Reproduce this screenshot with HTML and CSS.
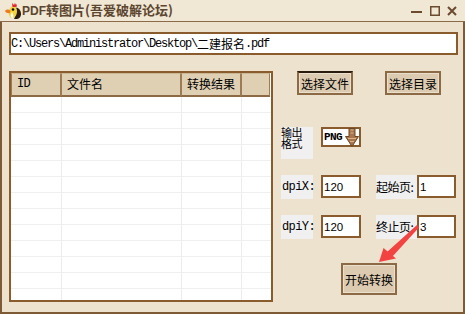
FILE: index.html
```html
<!DOCTYPE html>
<html>
<head>
<meta charset="utf-8">
<link rel="stylesheet" href="styles.css">
</head>
<body>
<div class="window">
  <div class="titlebar">
    <svg class="logo" width="18" height="18" viewBox="0 0 18 18">
      <path d="M11 6 C14 5 17 8 17 12 C17 15 15 17 12 17 L10 17 C12 14 12 10 11 6 Z" fill="#2a1a14"/>
      <path d="M7 5 C10 3 13 5 13 9 C13 13 11 16 8 16 C6 16 5 14 5 12 C5 9 5 7 7 5 Z" fill="#f4d23a"/>
      <path d="M8 10 C9 12 10 14 9 16 C7 16 6 14 7 12 Z" fill="#ffffff"/>
      <path d="M8 1 L10 3 L11 1 L12 3 L13 2 L12.5 5 L8.5 5 Z" fill="#e2262a"/>
      <path d="M1 9 C2 7 5 7 6.5 8.5 L6 11 C4 11.5 2 11 1 9 Z" fill="#f07a20"/>
      <circle cx="9" cy="7.5" r="1.3" fill="#111"/>
    </svg>
    <span class="title"><span class="t-latin">PDF</span>转图片(吾爱破解论坛)</span>
    <svg class="controls" width="50" height="14" viewBox="0 0 50 14">
      <rect x="2" y="7" width="11" height="2" fill="#6b4a2e"/>
      <rect x="21.75" y="2.75" width="8.5" height="8.5" fill="none" stroke="#6b4a2e" stroke-width="1.5"/>
      <path d="M39 3 L47 11 M47 3 L39 11" stroke="#6b4a2e" stroke-width="2"/>
    </svg>
  </div>
  <div class="content">
    <div class="path"><span class="mono">C:\Users\Administrator\Desktop\</span><span class="cjk">二建报名</span><span class="mono">.pdf</span></div>
    <div class="main">
      <div class="table">
        <div class="thead">
          <div class="th mono-s">ID</div>
          <div class="th">文件名</div>
          <div class="th">转换结果</div>
          <div class="th"></div>
        </div>
        <div class="tbody">
          <div class="tr"><div class="td"></div><div class="td"></div><div class="td"></div><div class="td"></div></div>
          <div class="tr"><div class="td"></div><div class="td"></div><div class="td"></div><div class="td"></div></div>
          <div class="tr"><div class="td"></div><div class="td"></div><div class="td"></div><div class="td"></div></div>
          <div class="tr"><div class="td"></div><div class="td"></div><div class="td"></div><div class="td"></div></div>
          <div class="tr"><div class="td"></div><div class="td"></div><div class="td"></div><div class="td"></div></div>
          <div class="tr"><div class="td"></div><div class="td"></div><div class="td"></div><div class="td"></div></div>
          <div class="tr"><div class="td"></div><div class="td"></div><div class="td"></div><div class="td"></div></div>
          <div class="tr"><div class="td"></div><div class="td"></div><div class="td"></div><div class="td"></div></div>
          <div class="tr"><div class="td"></div><div class="td"></div><div class="td"></div><div class="td"></div></div>
          <div class="tr"><div class="td"></div><div class="td"></div><div class="td"></div><div class="td"></div></div>
          <div class="tr"><div class="td"></div><div class="td"></div><div class="td"></div><div class="td"></div></div>
          <div class="tr"><div class="td"></div><div class="td"></div><div class="td"></div><div class="td"></div></div>
          <div class="tr"><div class="td"></div><div class="td"></div><div class="td"></div><div class="td"></div></div>
        </div>
      </div>
      <div class="panel">
        <div class="prow r1">
          <div class="btn btn-file focus">选择文件</div>
          <div class="btn btn-dir">选择目录</div>
        </div>
        <div class="prow r2">
          <div class="label label-fmt"><span class="fmt-line">输出</span><span class="fmt-line">格式</span></div>
          <div class="select"><span class="mono-b">PNG</span>
            <svg class="drop" width="14" height="19" viewBox="0 0 14 19">
              <path d="M4 0.5 L10 0.5 L10 8.5 L13.5 8.5 L7 18.5 L0.5 8.5 L4 8.5 Z" fill="#a8764a" stroke="#6e4523" stroke-width="1"/>
              <path d="M5.5 2 L8.5 2 M5.5 5 L8.5 5 M3 10.5 L11 10.5 M5 13.5 L9 13.5" stroke="#d9b48c" stroke-width="1"/>
            </svg>
          </div>
        </div>
        <div class="prow r3">
          <div class="label label-dpi mono-s">dpiX:</div>
          <div class="input num">120</div>
          <div class="label label-page">起始页:</div>
          <div class="input input-page num">1</div>
        </div>
        <div class="prow r4">
          <div class="label label-dpi mono-s">dpiY:</div>
          <div class="input num">120</div>
          <div class="label label-page">终止页:</div>
          <div class="input input-page num">3</div>
        </div>
        <div class="prow r5">
          <div class="btn btn-start">开始转换</div>
        </div>
      </div>
    </div>
  </div>
  <svg class="arrow" width="55" height="50" viewBox="0 0 55 50">
    <polygon points="17,32 47,5 49,7.5 22,37" fill="#f24242"/>
    <polygon points="9,42 13.5,28 26,38.5" fill="#f24242"/>
  </svg>
</div>
</body>
</html>
```

FILE: styles.css
```css
html, body {
  margin: 0;
  padding: 0;
  background: #ece2ce;
}

.window {
  position: relative;
  width: 465px;
  height: 314px;
  display: flex;
  flex-direction: column;
  background: #ece2ce;
  font-family: "Noto Sans CJK SC", "Liberation Sans", sans-serif;
  color: #000;
  overflow: hidden;
}

.titlebar {
  height: 21px;
  border-bottom: 1px solid #8a6a48;
  background: #f0e7d5;
  display: flex;
  align-items: center;
}

.logo {
  margin-left: 4px;
  flex: none;
}

.title {
  font-size: 13px;
  font-weight: bold;
  color: #5c4630;
  line-height: 21px;
  white-space: nowrap;
}

.t-latin {
  font-family: "Liberation Sans", sans-serif;
  font-size: 12px;
}

.controls {
  margin-left: auto;
  margin-right: 6px;
  flex: none;
}

.content {
  flex: 1;
  border: 2px solid #7e5b36;
  border-top: 0;
  padding: 10px 0 0 7px;
}

.path {
  width: 449px;
  height: 23px;
  box-sizing: border-box;
  border: 2px solid #8a5b2c;
  background: #fff;
  display: flex;
  align-items: center;
  white-space: nowrap;
}

.mono {
  font-family: "Liberation Mono", monospace;
  font-size: 12px;
  letter-spacing: -1.2px;
}

.cjk {
  font-size: 12px;
}

.mono-s {
  font-family: "Liberation Mono", monospace;
  font-size: 11px;
  letter-spacing: -0.6px;
}

.mono-b {
  font-family: "Liberation Mono", monospace;
  font-size: 11px;
  font-weight: bold;
  letter-spacing: -0.6px;
}

.main {
  display: flex;
  margin-top: 16px;
}

.table {
  width: 264px;
  height: 231px;
  box-sizing: border-box;
  border: 2px solid #8a5b2c;
  background: #fff;
  display: flex;
  flex-direction: column;
  overflow: hidden;
}

.thead {
  display: grid;
  grid-template-columns: 50px 120px 60px 29px;
  height: 24px;
  flex: none;
}

.th {
  box-sizing: border-box;
  background: #dfcfb3;
  border-top: 1px solid #cbb794;
  border-left: 1px solid #9c7b55;
  border-right: 1px solid #9c7b55;
  border-bottom: 2px solid #8b6a45;
  font-size: 12px;
  line-height: 20px;
  padding-left: 5px;
  white-space: nowrap;
}

.tbody {
  flex: 1;
  overflow: hidden;
}

.tr {
  display: grid;
  grid-template-columns: 51px 120px 60px 28px;
  height: 16px;
  box-sizing: border-box;
  border-bottom: 1px solid #efefef;
}

.td {
  border-right: 1px solid #ececec;
}

.td:last-child {
  border-right: 0;
}

.panel {
  margin-left: 8px;
  display: flex;
  flex-direction: column;
}

.prow {
  display: flex;
  align-items: flex-start;
}

.r1 { height: 24px; }
.r2 { margin-top: 32px; height: 32px; }
.r3 { margin-top: 16px; height: 24px; }
.r4 { margin-top: 16px; height: 24px; }
.r5 { margin-top: 24px; height: 32px; }

.btn {
  box-sizing: border-box;
  width: 56px;
  height: 24px;
  background: #dccbb0;
  border: 2px solid #8b6a45;
  box-shadow: inset 0 0 0 1px #eadfca;
  font-size: 12px;
  display: flex;
  align-items: center;
  justify-content: center;
  white-space: nowrap;
}

.btn.focus {
  border-top-color: #2b1c0e;
}

.btn-file { margin-left: 16px; }
.btn-dir { margin-left: 32px; }

.btn-start {
  margin-left: 60px;
  height: 32px;
}

.label {
  background: #f0f0f0;
  font-size: 12px;
  box-sizing: border-box;
}

.label-fmt {
  width: 32px;
  height: 32px;
  display: flex;
  flex-direction: column;
  font-size: 11px;
  letter-spacing: -0.5px;
}

.fmt-line {
  display: block;
  height: 11px;
  line-height: 11px;
  overflow: visible;
}

.label-dpi {
  width: 32px;
  height: 24px;
  line-height: 24px;
  padding-left: 1px;
}

.label-page {
  width: 41px;
  height: 24px;
  line-height: 24px;
  margin-left: 15px;
  white-space: nowrap;
  letter-spacing: -0.5px;
}

.select {
  margin-left: 8px;
  width: 40px;
  height: 20px;
  box-sizing: border-box;
  border: 2px solid #8a5b2c;
  background: #fff;
  display: flex;
  align-items: center;
  padding-left: 1px;
}

.drop {
  margin-left: auto;
}

.input {
  margin-left: 8px;
  width: 40px;
  height: 23px;
  box-sizing: border-box;
  border: 2px solid #8a5b2c;
  background: #fff;
  display: flex;
  align-items: center;
  padding-left: 1px;
}

.input-page {
  margin-left: 0;
  width: 39px;
}

.num {
  font-family: "Liberation Sans", sans-serif;
  font-size: 11.5px;
}

.arrow {
  position: absolute;
  left: 370px;
  top: 220px;
}
```
